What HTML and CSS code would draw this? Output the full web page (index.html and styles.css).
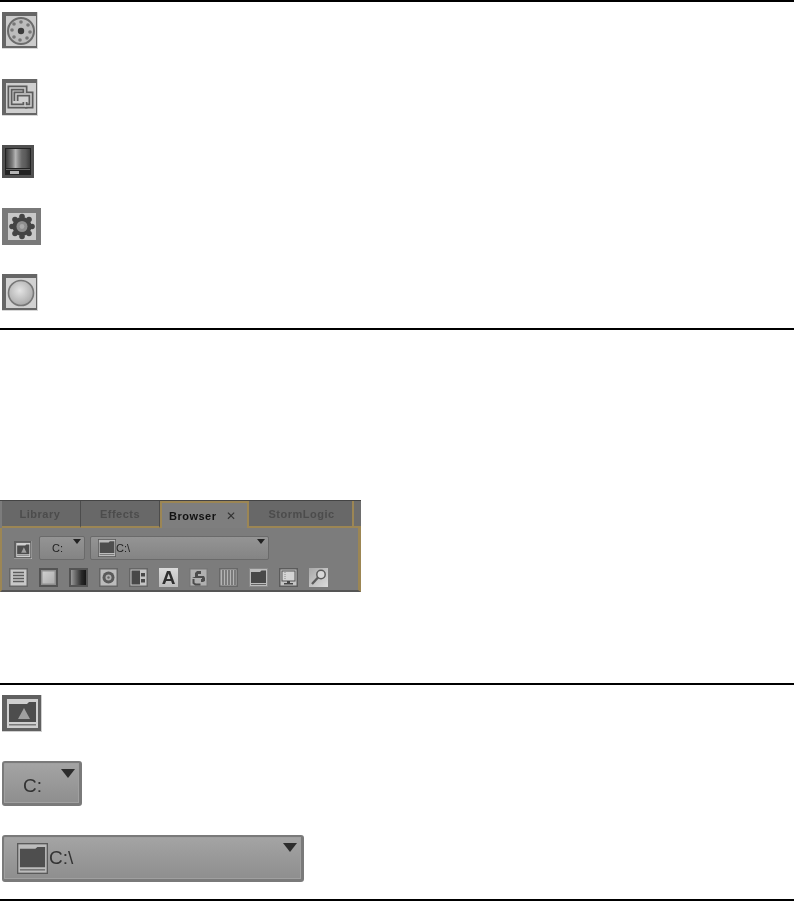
FILE: index.html
```html
<!DOCTYPE html>
<html lang="en">
<head>
  <meta charset="UTF-8" />
  <meta name="viewport" content="width=device-width, initial-scale=1.0"/>
  <title>Browser panel</title>
  <link rel="stylesheet" href="styles.css">
</head>
<body>

  <!-- shared icons -->
  <svg class="sprite" xmlns="http://www.w3.org/2000/svg">
    <defs>
      <linearGradient id="softFace" x1="0" y1="0" x2="1" y2="1">
        <stop offset="0" stop-color="#cfcfcf"/>
        <stop offset="1" stop-color="#adadad"/>
      </linearGradient>
      <radialGradient id="ballFace" cx="0.45" cy="0.4" r="0.7">
        <stop offset="0" stop-color="#e4e4e4"/>
        <stop offset="1" stop-color="#a0a0a0"/>
      </radialGradient>
      <linearGradient id="stripeFace" x1="0" y1="0" x2="1" y2="0">
        <stop offset="0" stop-color="#3a3a3a"/>
        <stop offset="0.14" stop-color="#5c5c5c"/>
        <stop offset="0.26" stop-color="#7c7c7c"/>
        <stop offset="0.4" stop-color="#b4b4b4"/>
        <stop offset="0.52" stop-color="#8c8c8c"/>
        <stop offset="0.66" stop-color="#666"/>
        <stop offset="0.82" stop-color="#5a5a5a"/>
        <stop offset="1" stop-color="#3c3c3c"/>
      </linearGradient>
      <linearGradient id="fadeFace" x1="0" y1="0" x2="1" y2="0">
        <stop offset="0" stop-color="#999"/>
        <stop offset="0.7" stop-color="#2a2a2a"/>
        <stop offset="1" stop-color="#161616"/>
      </linearGradient>
      <linearGradient id="lensFace" x1="0" y1="0" x2="1" y2="1">
        <stop offset="0" stop-color="#a8a8a8"/>
        <stop offset="1" stop-color="#dcdcdc"/>
      </linearGradient>
    </defs>

    <symbol id="i-dial" viewBox="0 0 36 37">
      <rect width="36" height="37" fill="#666"/>
      <rect x="4" y="4" width="30" height="30" fill="#cccccc"/>
      <path d="M35 0h1v37H0v-1h35z" fill="#d8d8d8"/>
      <circle cx="19" cy="19" r="13" fill="#bcbcbc" stroke="#6c6c6c" stroke-width="2"/>
      <circle cx="19" cy="19" r="3.200" fill="#3a3a3a"/>
      <g fill="#777">
        <circle cx="19" cy="10" r="1.800"/><circle cx="26" cy="13" r="1.800"/><circle cx="28" cy="20" r="1.800"/>
        <circle cx="25" cy="26" r="1.800"/><circle cx="18" cy="28" r="1.800"/><circle cx="12" cy="25" r="1.800"/>
        <circle cx="10" cy="18" r="1.800"/><circle cx="12" cy="12" r="1.800"/>
      </g>
    </symbol>

    <symbol id="i-link" viewBox="0 0 36 37">
      <rect width="36" height="37" fill="#666"/>
      <rect x="4" y="4" width="30" height="30" fill="#cfcfcf"/>
      <path d="M35 0h1v37H0v-1h35z" fill="#d8d8d8"/>
      <g fill="none" stroke="#5c5c5c" stroke-width="5">
        <path d="M23 14V9H8v18h15v-4"/>
        <path d="M14 22v-7h15v12h-6"/>
      </g>
      <g fill="none" stroke="#cfcfcf" stroke-width="1.500">
        <path d="M23 14V9H8v18h15v-4"/>
        <path d="M14 22v-7h15v12h-6"/>
      </g>
    </symbol>

    <symbol id="i-meter" viewBox="0 0 32 33">
      <rect width="32" height="33" fill="#505050"/>
      <rect x="3" y="3" width="26" height="27" fill="#222"/>
      <rect x="4" y="4" width="24" height="19" fill="url(#stripeFace)"/>
      <rect x="4" y="24" width="24" height="1" fill="#666"/>
      <rect x="8" y="26" width="9" height="3" fill="#b4b4b4"/>
    </symbol>

    <symbol id="i-gear" viewBox="0 0 39 37">
      <rect width="39" height="37" fill="#797979"/>
      <rect x="6" y="5" width="28" height="27" fill="#c8c8c8"/>
      <g fill="#444">
        <circle cx="20" cy="18.500" r="9.500"/>
        <circle cx="20" cy="8.500" r="2.800"/><circle cx="20" cy="28.500" r="2.800"/>
        <circle cx="10" cy="18.500" r="2.800"/><circle cx="30" cy="18.500" r="2.800"/>
        <circle cx="13" cy="11.500" r="2.800"/><circle cx="27" cy="11.500" r="2.800"/>
        <circle cx="13" cy="25.500" r="2.800"/><circle cx="27" cy="25.500" r="2.800"/>
      </g>
      <circle cx="20" cy="18.500" r="5.500" fill="#8e8e8e"/>
      <circle cx="20" cy="18.500" r="2.400" fill="#aaa"/>
    </symbol>

    <symbol id="i-ball" viewBox="0 0 36 37">
      <rect width="36" height="37" fill="#666"/>
      <rect x="4" y="4" width="30" height="30" fill="#d2d2d2"/>
      <path d="M35 0h1v37H0v-1h35z" fill="#d8d8d8"/>
      <circle cx="19" cy="19" r="12.500" fill="url(#ballFace)" stroke="#777" stroke-width="1.600"/>
    </symbol>

    <symbol id="i-picture" viewBox="0 0 40 37" preserveAspectRatio="none">
      <rect width="40" height="37" fill="#606060"/>
      <path d="M39 0h1v37H0v-1h39z" fill="#d0d0d0"/>
      <rect x="5" y="4" width="31" height="29" fill="#cfcfcf"/>
      <path d="M7 9h18l2-2h7v20H7z" fill="#4d4d4d"/>
      <path d="M22 13l6 11H16z" fill="#a0a0a0"/>
      <rect x="7" y="29" width="27" height="1.500" fill="#7a7a7a"/>
    </symbol>

    <symbol id="i-folder" viewBox="0 0 32 32">
      <rect x="0.700" y="0.700" width="30.600" height="30.600" fill="#bcbcbc" stroke="#5a5a5a" stroke-width="1.400"/>
      <path d="M3 6h16l2-2h8v21H3z" fill="#4e4e4e"/>
      <rect x="3" y="27" width="26" height="1.400" fill="#6a6a6a"/>
    </symbol>

    <symbol id="t-list" viewBox="0 0 19 19">
      <rect width="19" height="19" fill="#666"/>
      <rect x="1.500" y="1.500" width="16" height="16" fill="#c8c8c8"/>
      <path d="M4 4.500h11M4 7.500h11M4 10.500h11M4 13.500h11" stroke="#5c5c5c" stroke-width="1.400"/>
    </symbol>
    <symbol id="t-square" viewBox="0 0 19 19">
      <rect width="19" height="19" fill="#545454"/>
      <rect x="2" y="2" width="15" height="15" fill="#8f8f8f"/>
      <rect x="3.500" y="3.500" width="12" height="12" fill="url(#softFace)"/>
    </symbol>
    <symbol id="t-fade" viewBox="0 0 19 19">
      <rect width="19" height="19" fill="#545454"/>
      <rect x="2" y="2" width="15" height="15" fill="url(#fadeFace)"/>
    </symbol>
    <symbol id="t-disc" viewBox="0 0 19 19">
      <rect width="19" height="19" fill="#666"/>
      <rect x="1.500" y="1.500" width="16" height="16" fill="#bcbcbc"/>
      <circle cx="9.500" cy="9.500" r="6" fill="#5a5a5a"/>
      <circle cx="9.500" cy="9.500" r="3" fill="#b0b0b0"/>
      <circle cx="9.500" cy="9.500" r="1.200" fill="#666"/>
    </symbol>
    <symbol id="t-split" viewBox="0 0 19 19">
      <rect width="19" height="19" fill="#666"/>
      <rect x="1.500" y="1.500" width="16" height="16" fill="#c4c4c4"/>
      <rect x="2.500" y="2.500" width="8.500" height="14" fill="#484848"/>
      <rect x="12" y="5" width="4" height="3.500" fill="#484848"/>
      <rect x="12" y="11" width="4" height="3.500" fill="#484848"/>
    </symbol>
    <symbol id="t-loop" viewBox="0 0 19 19">
      <rect width="19" height="19" fill="#777"/>
      <rect x="1.500" y="1.500" width="16" height="16" fill="#b0b0b0"/>
      <path d="M6 9V5l2-2h4v3H9v2h6l1 2v3l-2 1h-2v-3h1v-1H5L3 9z" fill="#4c4c4c"/>
      <path d="M4.500 11v4l2 1.500h5" fill="none" stroke="#4c4c4c" stroke-width="2"/>
    </symbol>
    <symbol id="t-columns" viewBox="0 0 19 19">
      <rect width="19" height="19" fill="#686868"/>
      <rect x="1.500" y="1.500" width="16" height="16" fill="#b4b4b4"/>
      <path d="M4 2v15M7 2v15M10 2v15M13 2v15M16 2v15" stroke="#5c5c5c" stroke-width="1.300"/>
    </symbol>
    <symbol id="t-folder" viewBox="0 0 19 19">
      <rect width="19" height="19" fill="#8a8a8a"/>
      <rect x="1" y="1" width="17" height="17" fill="#bcbcbc"/>
      <path d="M2 4h9l1.500-1.500H17V15H2z" fill="#484848"/>
      <rect x="2" y="16" width="15" height="1" fill="#666"/>
    </symbol>
    <symbol id="t-screen" viewBox="0 0 19 19">
      <rect width="19" height="19" fill="#5c5c5c"/>
      <rect x="1.500" y="1.500" width="16" height="16" fill="#c4c4c4"/>
      <rect x="3" y="3" width="13" height="10" fill="#d4d4d4" stroke="#555" stroke-width="1"/>
      <path d="M6 4v8" stroke="#888" stroke-dasharray="1 1"/>
      <path d="M8 13h3v2h3v1.500H5V15h3z" fill="#444"/>
    </symbol>
    <symbol id="t-search" viewBox="0 0 19 19">
      <rect width="19" height="19" fill="url(#lensFace)"/>
      <circle cx="12" cy="6.500" r="4.200" fill="#d8d8d8" stroke="#5c5c5c" stroke-width="1.500"/>
      <path d="M9 9.500l-6 6.500" stroke="#5c5c5c" stroke-width="2.400"/>
    </symbol>
  </svg>

  <div class="rule"></div>
  <div class="icon-list top-list">
    <svg class="icon"><use href="#i-dial"/></svg>
    <svg class="icon"><use href="#i-link"/></svg>
    <svg class="icon meter"><use href="#i-meter"/></svg>
    <svg class="icon gear"><use href="#i-gear"/></svg>
    <svg class="icon"><use href="#i-ball"/></svg>
  </div>
  <div class="rule"></div>

  <!-- Browser panel -->
  <div class="panel">
    <div class="tabs">
      <div class="tab lib">Library</div>
      <div class="tab fx">Effects</div>
      <div class="tab active">Browser <span class="close">✕</span></div>
      <div class="tab storm">StormLogic</div>
      <div class="tab stub"></div>
    </div>
    <div class="panel-body">
      <div class="drive-row">
        <svg class="tool pic"><use href="#i-picture"/></svg>
        <div class="combo small-drive">C:<span class="arrow"></span></div>
        <div class="combo small-path"><svg class="mini-folder"><use href="#i-folder"/></svg>C:\<span class="arrow"></span></div>
      </div>
      <div class="tool-row">
        <svg class="tool"><use href="#t-list"/></svg>
        <svg class="tool"><use href="#t-square"/></svg>
        <svg class="tool"><use href="#t-fade"/></svg>
        <svg class="tool"><use href="#t-disc"/></svg>
        <svg class="tool"><use href="#t-split"/></svg>
        <div class="tool letter">A</div>
        <svg class="tool"><use href="#t-loop"/></svg>
        <svg class="tool"><use href="#t-columns"/></svg>
        <svg class="tool"><use href="#t-folder"/></svg>
        <svg class="tool"><use href="#t-screen"/></svg>
        <svg class="tool"><use href="#t-search"/></svg>
      </div>
    </div>
  </div>

  <div class="rule lower"></div>
  <div class="icon-list bottom-list">
    <svg class="icon picture"><use href="#i-picture"/></svg>
    <div class="big-combo drive">C:<span class="arrow"></span></div>
    <div class="big-combo path"><svg class="big-folder"><use href="#i-folder"/></svg>C:\<span class="arrow"></span></div>
  </div>
  <div class="rule"></div>

</body>
</html>
```

FILE: styles.css
```css
html, body {
  margin: 0;
  padding: 0;
  background: #fff;
}

body {
  font-family: "Liberation Sans", Arial, sans-serif;
  color: #333;
  overflow: hidden;
}

.sprite {
  display: block;
  width: 0;
  height: 0;
}

.rule {
  height: 2px;
  background: #000;
}

.rule.lower {
  margin-top: 91px;
}

.icon-list {
  display: flex;
  flex-direction: column;
  align-items: flex-start;
  padding: 10px 0 17px 2px;
}

.top-list {
  gap: 29.5px;
}

.bottom-list {
  gap: 29px;
}

.icon {
  display: block;
  width: 36px;
  height: 37px;
  filter: blur(0.7px);
}

.icon.meter {
  width: 32px;
  height: 33px;
}

.icon.gear {
  width: 39px;
  height: 37px;
}

.icon.picture {
  width: 40px;
  height: 37px;
}

/* panel */
.panel {
  width: 361px;
  height: 92px;
  margin-top: 170px;
  background: #7c7c7c;
  border-top: 1px solid #444;
  box-sizing: border-box;
  filter: blur(0.3px);
}

.tabs {
  display: flex;
  height: 27px;
}

.tab {
  box-sizing: border-box;
  display: flex;
  align-items: center;
  justify-content: center;
  background: #686868;
  border-right: 1px solid #4c4c4c;
  border-bottom: 2px solid #9c8654;
  font-size: 11px;
  font-weight: bold;
  letter-spacing: 0.5px;
  color: #4c4c4c;
}

.tab.lib {
  width: 79px;
  margin-left: 2px;
  padding-right: 2px;
}

.tab.fx {
  width: 79px;
}

.tab.active {
  width: 89px;
  padding-right: 4px;
  background: #7e7e7e;
  border: 2px solid #9c8654;
  border-bottom: none;
  color: #111;
  gap: 9px;
}

.close {
  font-size: 12px;
  font-weight: normal;
  color: #333;
}

.tab.storm {
  width: 105px;
  padding-left: 2px;
  border-right: 2px solid #9c8654;
}

.tab.stub {
  width: 7px;
  border-right: none;
  background: #6e6e6e;
}

.panel-body {
  box-sizing: border-box;
  height: 64px;
  border-left: 2px solid #9c8654;
  border-right: 3px solid #9c8654;
  border-bottom: 2px solid #555;
  padding: 8px 0 0 7px;
}

.drive-row {
  display: flex;
  align-items: center;
  height: 24px;
}

.tool-row {
  display: flex;
  gap: 11px;
  margin-top: 8px;
}

.tool {
  display: block;
  width: 19px;
  height: 19px;
  filter: blur(0.5px);
}

.tool.pic {
  width: 18px;
  height: 18px;
  margin: 3px 7px 0 5px;
}

.tool.letter {
  background: linear-gradient(#dadada, #bcbcbc);
  font-size: 19px;
  font-weight: bold;
  line-height: 20px;
  text-align: center;
  color: #2e2e2e;
}

.combo {
  box-sizing: border-box;
  position: relative;
  display: flex;
  align-items: center;
  height: 24px;
  border: 1px solid #6a6a6a;
  border-radius: 2px;
  background: linear-gradient(#949494, #848484);
  font-size: 11px;
  color: #222;
}

.small-drive {
  width: 46px;
  padding-left: 12px;
}

.small-path {
  width: 179px;
  margin-left: 5px;
  padding-left: 7px;
}

.mini-folder {
  display: block;
  width: 18px;
  height: 18px;
  filter: blur(0.4px);
}

.combo .arrow {
  position: absolute;
  top: 2px;
  right: 3px;
  border-left: 4px solid transparent;
  border-right: 4px solid transparent;
  border-top: 5px solid #222;
}

/* enlarged controls */
.big-combo {
  box-sizing: border-box;
  position: relative;
  display: flex;
  align-items: center;
  border: 1px solid #7a7a7a;
  border-width: 2px 3px 3px 2px;
  border-radius: 3px;
  background: linear-gradient(#a4a4a4, #8e8e8e);
  box-shadow: inset 0 0 0 1px #a0a0a0;
  font-size: 19px;
  color: #333;
  filter: blur(0.6px);
}

.big-combo.drive {
  width: 80px;
  height: 45px;
  padding: 6px 0 0 19px;
}

.big-combo.path {
  width: 302px;
  height: 47px;
  padding-left: 13px;
}

.big-folder {
  display: block;
  width: 31px;
  height: 31px;
  margin-right: 1px;
}

.big-combo .arrow {
  position: absolute;
  top: 6px;
  right: 4px;
  border-left: 7px solid transparent;
  border-right: 7px solid transparent;
  border-top: 9px solid #2c2c2c;
}
```
